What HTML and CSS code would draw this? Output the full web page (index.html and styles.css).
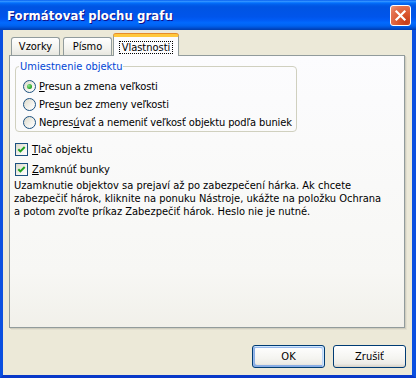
FILE: index.html
```html
<!DOCTYPE html>
<html>
<head>
<meta charset="utf-8">
<link rel="stylesheet" href="styles.css">
</head>
<body>
  <div class="window">
    <!-- Title bar -->
    <div class="titlebar">
      <span class="title">Formátovať plochu grafu</span>
      <button class="close" aria-label="Zavrieť">
        <svg width="13" height="13" viewBox="0 0 13 13">
          <path d="M2.5 2.5 L10.5 10.5 M10.5 2.5 L2.5 10.5" stroke="#fff" stroke-width="2.2" stroke-linecap="square"/>
        </svg>
      </button>
    </div>

    <div class="client">
      <!-- Tab links -->
      <div class="tabs">
        <div class="tab tab-first">Vzorky</div>
        <div class="tab">Písmo</div>
        <div class="tab active"><span class="focus">Vlastnosti</span></div>
      </div>

      <!-- Tab content -->
      <div class="panel">
        <fieldset class="group">
          <legend>Umiestnenie objektu</legend>
          <label class="option"><span class="radio checked"></span><span><u>P</u>resun a zmena veľkosti</span></label>
          <label class="option"><span class="radio"></span><span>Pre<u>s</u>un bez zmeny veľkosti</span></label>
          <label class="option"><span class="radio"></span><span>Nepres<u>ú</u>vať a nemeniť veľkosť objektu podľa buniek</span></label>
        </fieldset>

        <label class="check"><span class="box"><svg width="11" height="11" viewBox="0 0 11 11"><path d="M2.3 5.2 L4.4 7.4 L8.7 3" fill="none" stroke="#21a121" stroke-width="2"/></svg></span><span><u>T</u>lač objektu</span></label>
        <label class="check"><span class="box"><svg width="11" height="11" viewBox="0 0 11 11"><path d="M2.3 5.2 L4.4 7.4 L8.7 3" fill="none" stroke="#21a121" stroke-width="2"/></svg></span><span><u>Z</u>amknúť bunky</span></label>

        <p class="note">Uzamknutie objektov sa prejaví až po zabezpečení hárka. Ak chcete<br>zabezpečiť hárok, kliknite na ponuku Nástroje, ukážte na položku Ochrana<br>a potom zvoľte príkaz Zabezpečiť hárok. Heslo nie je nutné.</p>
      </div>

      <div class="buttons">
        <button class="btn default">OK</button>
        <button class="btn">Zrušiť</button>
      </div>
    </div>
  </div>
</body>
</html>
```

FILE: styles.css
```css
* {box-sizing: border-box}

body {
  margin: 0;
  font-family: "DejaVu Sans Condensed", "Liberation Sans", sans-serif;
  font-size: 11px;
  background: #0a4fe0;
}

.window {
  width: 416px;
  height: 378px;
  display: flex;
  flex-direction: column;
}

/* Title bar */
.titlebar {
  height: 30px;
  flex: none;
  display: flex;
  align-items: center;
  justify-content: space-between;
  padding: 0 5px 0 7px;
  background: linear-gradient(to bottom, #0058ee 0%, #3593ff 4%, #288eff 6%, #127dff 8%, #036ffc 10%, #0262ee 14%, #0057e5 20%, #0054e3 24%, #0055eb 56%, #005bf5 66%, #026afe 76%, #0062ef 86%, #0052d6 92%, #0046c0 96%, #003dae 100%);
}

.title {
  color: #fff;
  font-weight: bold;
  font-size: 13px;
  text-shadow: 1px 1px #0f1089;
  letter-spacing: 0.1px;
}

.close {
  width: 21px;
  height: 21px;
  padding: 0;
  border: 1px solid #fff;
  border-radius: 3px;
  background: radial-gradient(circle at 80% 85%, #c53d1a 0, #d9542b 35%, #e47352 75%, #ee9a7c 100%);
  display: flex;
  align-items: center;
  justify-content: center;
}

/* Client area */
.client {
  flex: 1;
  background: #ece9d8;
  border-left: 3px solid #0a4fe0;
  border-right: 4px solid #0a4fe0;
  border-bottom: 3px solid #0838c8;
  padding: 4px 7px 0 6px;
  display: flex;
  flex-direction: column;
}

/* Tabs */
.tabs {
  height: 21px;
  display: flex;
  align-items: flex-end;
  padding-left: 2px;
}

.tab {
  height: 18px;
  width: 49px;
  margin-right: 3px;
  border: 1px solid #919b9c;
  border-bottom: none;
  border-radius: 3px 3px 0 0;
  background: linear-gradient(#fff, #f3f3ef 60%, #e8e7e0);
  text-align: center;
  line-height: 17px;
  color: #000;
}

.tab.active {
  height: 22px;
  width: 66px;
  margin-left: -2px;
  margin-bottom: -1px;
  position: relative;
  z-index: 1;
  background: #fcfcfe;
  border-top: 3px solid #ffc83c;
  box-shadow: 0 -1px 0 #e68b2c;
  padding-top: 4px;
  line-height: 12px;
}

.focus {
  display: inline-block;
  border: 1px dotted #000;
  padding: 0 2px;
  line-height: 11px;
}

/* Tab content */
.panel {
  height: 273px;
  border: 1px solid #919b9c;
  background: linear-gradient(#fcfcfe, #f7f7f4 80%, #f1f0ea);
  box-shadow: 1px 1px 0 #d0cebf, 2px 2px 0 #e2dfd0;
  padding: 0 0 0 4px;
}

.group {
  margin: 4px 0 0 1px;
  width: 282px;
  padding: 0 0 0 7px;
  border: 1px solid #d0d0bf;
  border-radius: 4px;
}

.group legend {
  color: #0046d5;
  padding: 0 1px;
  margin-left: -4px;
  line-height: 13px;
}

.option {
  display: flex;
  align-items: center;
  height: 18px;
  gap: 3px;
  letter-spacing: -0.1px;
}

.option:first-of-type {
  margin-top: 4px;
}

.radio {
  width: 13px;
  height: 13px;
  border-radius: 50%;
  border: 1px solid #1c5180;
  background: linear-gradient(135deg, #dcd9c9, #f4f3ee 60%, #fff);
  display: flex;
  align-items: center;
  justify-content: center;
}

.radio.checked::after {
  content: "";
  width: 5px;
  height: 5px;
  border-radius: 50%;
  background: radial-gradient(circle at 35% 35%, #8ee38e, #21a121 70%);
}

.check {
  display: flex;
  align-items: center;
  height: 20px;
  gap: 4px;
  padding-left: 1px;
}

.check:first-of-type {
  margin-top: 7px;
}

.box {
  width: 13px;
  height: 13px;
  border: 1px solid #1c5180;
  background: linear-gradient(135deg, #dcd9c9, #f4f3ee 60%, #fff);
  display: flex;
}

.note {
  margin: 0;
  line-height: 13px;
  white-space: nowrap;
}

/* Dialog buttons */
.buttons {
  display: flex;
  justify-content: flex-end;
  gap: 8px;
  margin: 17px -1px 0 0;
}

.btn {
  width: 73px;
  height: 23px;
  font: inherit;
  color: #000;
  border: 1px solid #003c74;
  border-radius: 3px;
  background: linear-gradient(#fff, #f4f4f0 60%, #ecebe6 85%, #d6d0c5);
  padding: 0;
}

.btn.default {
  box-shadow: inset -1px 1px #cee7ff, inset 1px 2px #98b8ea, inset -2px 2px #bcd4f6, inset 1px -1px #89ade4, inset 2px -2px #89ade4;
}
```
